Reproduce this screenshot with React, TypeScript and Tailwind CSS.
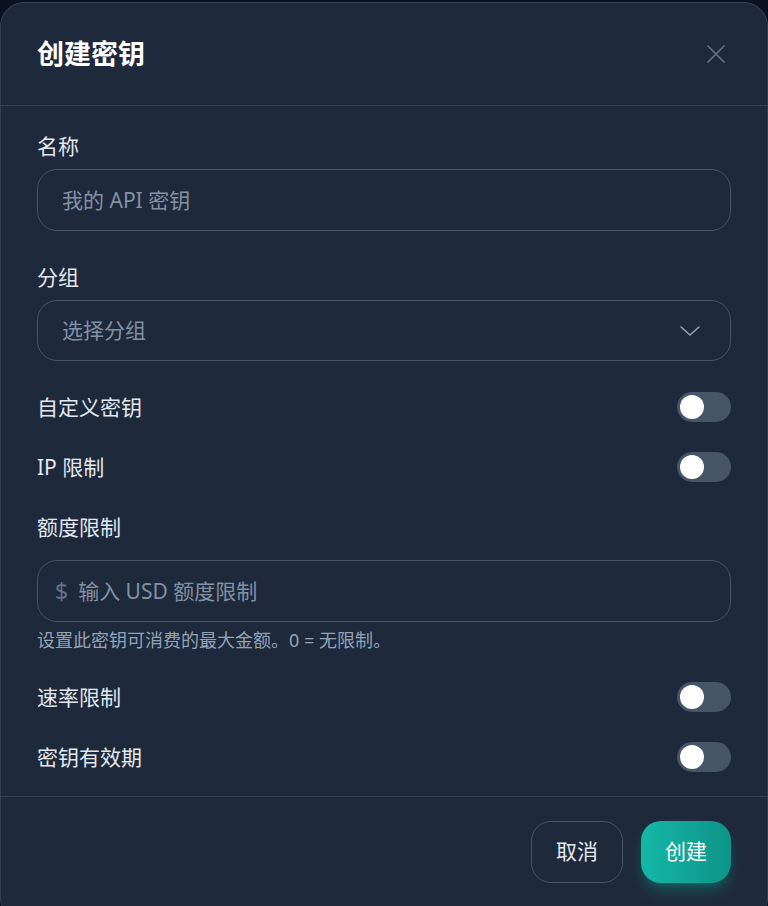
import { useState } from 'react';

const font = { fontFamily: '"Noto Sans", "Noto Sans CJK SC", sans-serif' };

function Toggle({ on, onChange }: { on: boolean; onChange: () => void }) {
  return (
    <button
      type="button"
      onClick={onChange}
      className={`relative h-[30px] w-[54px] rounded-full transition-colors ${on ? 'bg-teal-500' : 'bg-[#475569]'}`}
    >
      <span
        className={`absolute top-[3px] h-[24px] w-[24px] rounded-full bg-white transition-all ${on ? 'left-[27px]' : 'left-[3px]'}`}
      />
    </button>
  );
}

function ToggleRow({ label }: { label: string }) {
  const [on, setOn] = useState(false);
  return (
    <div className="flex h-[30px] items-center justify-between">
      <span className="text-[21px] leading-[28px] text-[#e2e8f0]">{label}</span>
      <Toggle on={on} onChange={() => setOn(v => !v)} />
    </div>
  );
}

export default function App() {
  return (
    <div className="h-[906px] w-full overflow-hidden bg-[#0b1120] pt-[2px]" style={font}>
      <div className="flex h-[920px] w-full flex-col rounded-[24px] border border-[#334155] bg-[#1e293b]">
        {/* Header */}
        <div className="flex h-[103px] items-center justify-between border-b border-[#334155] px-[36px]">
          <h1 className="text-[27px] font-bold text-white">创建密钥</h1>
          <button type="button" className="mr-[3px] text-[#64748b]">
            <svg width="24" height="24" viewBox="0 0 24 24" fill="none" stroke="currentColor" strokeWidth="1.6" strokeLinecap="round">
              <path d="M4 4l16 16M20 4L4 20" />
            </svg>
          </button>
        </div>

        {/* Body */}
        <div className="border-b border-[#334155] px-[36px] pb-[24px] pt-[26px]">
          <label className="block text-[21px] leading-[28px] text-[#e2e8f0]">名称</label>
          <input
            placeholder="我的 API 密钥"
            className="mt-[9px] h-[62px] w-full rounded-[20px] border border-[#475569] bg-transparent px-[24px] text-[21px] text-white outline-none placeholder:text-[#8391a5]"
          />

          <label className="mt-[32px] block text-[21px] leading-[28px] text-[#e2e8f0]">分组</label>
          <div className="mt-[9px] flex h-[61px] w-full items-center justify-between rounded-[20px] border border-[#475569] px-[24px]">
            <span className="text-[21px] text-[#8391a5]">选择分组</span>
            <svg width="24" height="24" viewBox="0 0 24 24" fill="none" stroke="#94a3b8" strokeWidth="1.6" strokeLinecap="round" strokeLinejoin="round" className="mr-[4px]">
              <path d="M3 8l9 8 9-8" />
            </svg>
          </div>

          <div className="mt-[31px]">
            <ToggleRow label="自定义密钥" />
          </div>
          <div className="mt-[30px]">
            <ToggleRow label="IP 限制" />
          </div>

          <label className="mt-[31px] block text-[21px] leading-[28px] text-[#e2e8f0]">额度限制</label>
          <div className="mt-[19px] flex h-[62px] w-full items-center rounded-[20px] border border-[#475569] pl-[17px] pr-[24px]">
            <span className="text-[23px] text-[#64748b]">$</span>
            <input
              placeholder="输入 USD 额度限制"
              className="ml-[10px] h-full flex-1 bg-transparent text-[21px] text-white outline-none placeholder:text-[#8391a5]"
            />
          </div>
          <p className="mt-[6px] text-[18px] leading-[24px] text-[#94a3b8]">设置此密钥可消费的最大金额。0 = 无限制。</p>

          <div className="mt-[30px]">
            <ToggleRow label="速率限制" />
          </div>
          <div className="mt-[30px]">
            <ToggleRow label="密钥有效期" />
          </div>
        </div>

        {/* Footer */}
        <div className="flex justify-end gap-[18px] px-[36px] pt-[24px]">
          <button type="button" className="h-[62px] w-[92px] rounded-[20px] border border-[#475569] text-[21px] text-[#e2e8f0]">
            取消
          </button>
          <button
            type="button"
            className="h-[62px] w-[90px] rounded-[20px] bg-gradient-to-r from-[#14b8a6] to-[#0d9488] text-[21px] text-white shadow-lg shadow-teal-500/30"
          >
            创建
          </button>
        </div>
      </div>
    </div>
  );
}
